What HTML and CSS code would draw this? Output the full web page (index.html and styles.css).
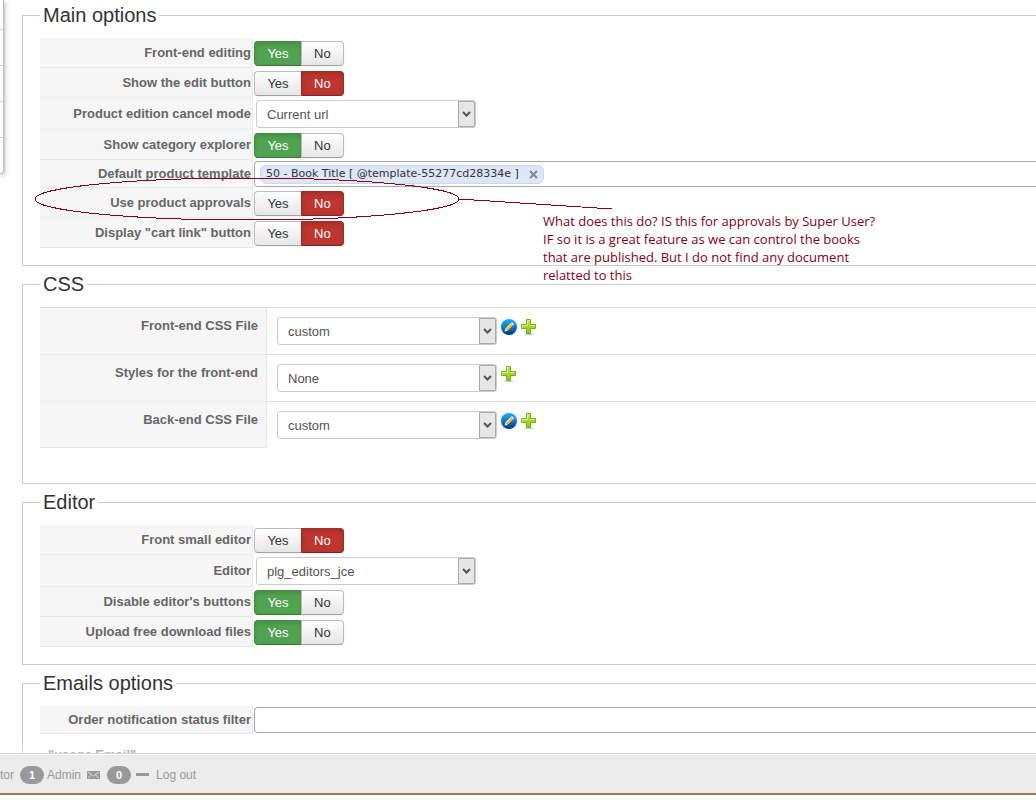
FILE: index.html
```
<!DOCTYPE html>
<html lang="en">
<head>
    <meta charset="UTF-8">
    <meta name="viewport" content="width=device-width, initial-scale=1.0">
    <title>Configuration</title>
    <link rel="stylesheet" href="styles.css">
</head>
<body>
    <!-- icons shared by the CSS file rows -->
    <svg class="sprite" aria-hidden="true">
        <defs>
            <linearGradient id="blue" x1="0" y1="0" x2="0" y2="1">
                <stop offset="0" stop-color="#12b4f5"/>
                <stop offset="0.5" stop-color="#0a78e0"/>
                <stop offset="1" stop-color="#05327c"/>
            </linearGradient>
            <linearGradient id="green" x1="0" y1="0" x2="0" y2="1">
                <stop offset="0" stop-color="#c4e84a"/>
                <stop offset="1" stop-color="#8cc80a"/>
            </linearGradient>
            <symbol id="icon-edit" viewBox="0 0 16 16">
                <circle cx="8" cy="8" r="8" fill="url(#blue)"/>
                <path d="M3.6 12.6 4.4 9.4 6.8 11.8z" fill="#fff3d0"/>
                <path d="M4.4 9.4 9.6 4.2 12 6.6 6.8 11.8z" fill="#ffb81c"/>
                <path d="M4.4 9.4 9.6 4.2 10.4 5 5.2 10.2z" fill="#ffe36a"/>
                <path d="M9.6 4.2 11 2.8 13.4 5.2 12 6.6z" fill="#f6d3b8"/>
            </symbol>
            <symbol id="icon-add" viewBox="0 0 16 16">
                <ellipse cx="8" cy="15.2" rx="5" ry="0.8" fill="#ccc"/>
                <path d="M5.5 0.5h4v5h5v4h-5v5h-4v-5h-5v-4h5z" fill="url(#green)" stroke="#76ae1c"/>
                <path d="M6.5 6.5v-5h2M1.5 8.500v-2h5M9.5 6.500h4" fill="none" stroke="#dcf296"/>
            </symbol>
        </defs>
    </svg>

    <div class="page">
        <aside class="sidebar">
            <div class="sidebar-item first"></div>
            <div class="sidebar-item"></div>
            <div class="sidebar-item"></div>
            <div class="sidebar-item"></div>
            <div class="sidebar-item"></div>
        </aside>

        <main class="content">
            <fieldset class="panel">
                <legend>Main options</legend>
                <table class="options">
                    <tr>
                        <th>Front-end editing</th>
                        <td>
                            <div class="btn-group" role="radiogroup" aria-label="Front-end editing">
                                <input type="radio" id="fe-yes" name="fe" checked><label class="yes" for="fe-yes">Yes</label>
                                <input type="radio" id="fe-no" name="fe"><label class="no" for="fe-no">No</label>
                            </div>
                        </td>
                    </tr>
                    <tr>
                        <th>Show the edit button</th>
                        <td>
                            <div class="btn-group" role="radiogroup" aria-label="Show the edit button">
                                <input type="radio" id="edit-yes" name="edit"><label class="yes" for="edit-yes">Yes</label>
                                <input type="radio" id="edit-no" name="edit" checked><label class="no" for="edit-no">No</label>
                            </div>
                        </td>
                    </tr>
                    <tr>
                        <th><label for="cancel-mode">Product edition cancel mode</label></th>
                        <td class="select-cell">
                            <select id="cancel-mode">
                                <option>Current url</option>
                            </select>
                        </td>
                    </tr>
                    <tr>
                        <th>Show category explorer</th>
                        <td>
                            <div class="btn-group" role="radiogroup" aria-label="Show category explorer">
                                <input type="radio" id="cat-yes" name="cat" checked><label class="yes" for="cat-yes">Yes</label>
                                <input type="radio" id="cat-no" name="cat"><label class="no" for="cat-no">No</label>
                            </div>
                        </td>
                    </tr>
                    <tr>
                        <th><label for="template">Default product template</label></th>
                        <td class="tags-cell">
                            <div class="tags">
                                <span class="tag">50 - Book Title [ @template-55277cd28334e ]
                                    <button type="button" class="tag-remove" aria-label="Remove">
                                        <svg width="9" height="9" viewBox="0 0 9 9"><path d="M1 1l7 7M8 1l-7 7" stroke="#888" stroke-width="2"/></svg>
                                    </button>
                                </span>
                                <input type="text" id="template">
                            </div>
                        </td>
                    </tr>
                    <tr>
                        <th>Use product approvals</th>
                        <td>
                            <div class="btn-group" role="radiogroup" aria-label="Use product approvals">
                                <input type="radio" id="app-yes" name="app"><label class="yes" for="app-yes">Yes</label>
                                <input type="radio" id="app-no" name="app" checked><label class="no" for="app-no">No</label>
                            </div>
                        </td>
                    </tr>
                    <tr>
                        <th>Display "cart link" button</th>
                        <td>
                            <div class="btn-group" role="radiogroup" aria-label="Display cart link button">
                                <input type="radio" id="cart-yes" name="cart"><label class="yes" for="cart-yes">Yes</label>
                                <input type="radio" id="cart-no" name="cart" checked><label class="no" for="cart-no">No</label>
                            </div>
                        </td>
                    </tr>
                </table>
            </fieldset>

            <fieldset class="panel">
                <legend>CSS</legend>
                <table class="options files">
                    <tr>
                        <th><label for="css-front">Front-end CSS File</label></th>
                        <td>
                            <div class="file-row">
                                <select id="css-front">
                                    <option>custom</option>
                                </select>
                                <a href="#" aria-label="Edit"><svg width="16" height="16"><use href="#icon-edit"/></svg></a>
                                <a href="#" aria-label="Add"><svg width="16" height="16"><use href="#icon-add"/></svg></a>
                            </div>
                        </td>
                    </tr>
                    <tr>
                        <th><label for="css-style">Styles for the front-end</label></th>
                        <td>
                            <div class="file-row">
                                <select id="css-style">
                                    <option>None</option>
                                </select>
                                <a href="#" aria-label="Add"><svg width="16" height="16"><use href="#icon-add"/></svg></a>
                            </div>
                        </td>
                    </tr>
                    <tr>
                        <th><label for="css-back">Back-end CSS File</label></th>
                        <td>
                            <div class="file-row">
                                <select id="css-back">
                                    <option>custom</option>
                                </select>
                                <a href="#" aria-label="Edit"><svg width="16" height="16"><use href="#icon-edit"/></svg></a>
                                <a href="#" aria-label="Add"><svg width="16" height="16"><use href="#icon-add"/></svg></a>
                            </div>
                        </td>
                    </tr>
                </table>
            </fieldset>

            <fieldset class="panel">
                <legend>Editor</legend>
                <table class="options">
                    <tr>
                        <th>Front small editor</th>
                        <td>
                            <div class="btn-group" role="radiogroup" aria-label="Front small editor">
                                <input type="radio" id="small-yes" name="small"><label class="yes" for="small-yes">Yes</label>
                                <input type="radio" id="small-no" name="small" checked><label class="no" for="small-no">No</label>
                            </div>
                        </td>
                    </tr>
                    <tr>
                        <th><label for="editor">Editor</label></th>
                        <td class="select-cell">
                            <select id="editor">
                                <option>plg_editors_jce</option>
                            </select>
                        </td>
                    </tr>
                    <tr>
                        <th>Disable editor's buttons</th>
                        <td>
                            <div class="btn-group" role="radiogroup" aria-label="Disable editor's buttons">
                                <input type="radio" id="dis-yes" name="dis" checked><label class="yes" for="dis-yes">Yes</label>
                                <input type="radio" id="dis-no" name="dis"><label class="no" for="dis-no">No</label>
                            </div>
                        </td>
                    </tr>
                    <tr>
                        <th>Upload free download files</th>
                        <td>
                            <div class="btn-group" role="radiogroup" aria-label="Upload free download files">
                                <input type="radio" id="up-yes" name="up" checked><label class="yes" for="up-yes">Yes</label>
                                <input type="radio" id="up-no" name="up"><label class="no" for="up-no">No</label>
                            </div>
                        </td>
                    </tr>
                </table>
            </fieldset>

            <fieldset class="panel">
                <legend>Emails options</legend>
                <table class="options">
                    <tr>
                        <th><label for="status-filter">Order notification status filter</label></th>
                        <td class="tags-cell">
                            <div class="tags">
                                <input type="text" id="status-filter">
                            </div>
                        </td>
                    </tr>
                </table>
                <p class="more">"usage Email"</p>
            </fieldset>
        </main>

        <!-- hand-drawn note over the form -->
        <div class="note">
            <svg class="note-mark" width="580" height="46" viewBox="0 0 580 46">
                <ellipse cx="213" cy="23" rx="212" ry="21"/>
                <path d="M425 23 578 33"/>
            </svg>
            <p class="note-text">What does this do? IS this for approvals by Super User?<br>IF so it is a great feature as we can control the books<br>that are published. But I do not find any document<br>relatted to this</p>
        </div>
    </div>

    <footer class="status">
        <span>tor</span>
        <span class="badge">1</span>
        <span>Admin</span>
        <svg class="mail" width="13" height="8" viewBox="0 0 13 8">
            <rect width="13" height="8" fill="#999"/>
            <path d="M1 1l5.5 4L12 1M1 7l3.500-3M12 7L8.500 4" fill="none" stroke="#ececec" stroke-width="0.8"/>
        </svg>
        <span class="badge">0</span>
        <span class="dash"></span>
        <a href="#">Log out</a>
    </footer>
</body>
</html>
```
FILE: styles.css
```
* {
    box-sizing: border-box;
}

body {
    margin: 0;
    height: 100vh;
    display: flex;
    flex-direction: column;
    overflow: hidden;
    padding-bottom: 5px;
    background-color: #fff;
    color: #555;
    font-family: "Liberation Sans", Arial, sans-serif;
    font-size: 13px;
    line-height: 18px;
}

.sprite {
    position: absolute;
    width: 0;
    height: 0;
}

.page {
    position: relative;
    flex: 1;
    min-height: 0;
    display: flex;
    align-items: flex-start;
    gap: 18px;
    overflow: hidden;
}

.sidebar {
    flex: none;
    width: 4px;
    border-right: 1px solid #bbb;
    border-bottom: 1px solid #bbb;
    border-bottom-right-radius: 4px;
    box-shadow: 1px 2px 4px rgba(0,0,0,0.3);
}

.sidebar-item {
    height: 36px;
    border-bottom: 1px solid #ccc;
}

.sidebar-item.first {
    height: 30px;
}

.sidebar-item:last-child {
    height: 35px;
    border-bottom: none;
}

.content {
    flex: 1;
    min-width: 0;
    display: flex;
    flex-direction: column;
    gap: 3px;
}

.panel {
    margin: 0;
    padding: 8px 0 17px 17px;
    border: 1px solid #ccc;
    border-right: none;
    min-width: 0;
}

legend {
    padding: 0 3px;
    color: #333;
    font-size: 20px;
    line-height: 30px;
}

.options {
    width: 100%;
    border-collapse: separate;
    border-spacing: 0;
}

.options th {
    width: 213px;
    padding: 0 1px 0 0;
    background-color: #f6f6f6;
    border-right: 1px solid #e9e9e9;
    border-bottom: 1px solid #e9e9e9;
    color: #666;
    text-align: right;
    white-space: nowrap;
}

.options td {
    padding: 3px 0 2px 1px;
}

.options .select-cell {
    padding: 2px 0 2px 3px;
}

.options .tags-cell {
    padding: 1px 0 1px 1px;
}

/* yes / no switch */
.btn-group {
    display: flex;
}

.btn-group input {
    appearance: none;
    width: 0;
    height: 0;
    margin: 0;
}

.btn-group label {
    height: 25px;
    padding: 0 12px;
    border: 1px solid #bbb;
    border-bottom-color: #a2a2a2;
    background: linear-gradient(#fff, #e6e6e6);
    color: #333;
    line-height: 24px;
    text-align: center;
    cursor: pointer;
    box-shadow: 0 1px 2px rgba(0,0,0,0.05);
}

.btn-group .yes {
    width: 47px;
    border-radius: 4px 0 0 4px;
    border-right: none;
}

.btn-group .no {
    border-radius: 0 4px 4px 0;
}

.btn-group input:checked + .yes {
    background: #51a351;
    border-color: #419141 #419141 #2f7a2f;
    color: #fff;
    box-shadow: inset 0 2px 4px rgba(0,0,0,0.15);
}

.btn-group input:checked + .no {
    background: #bd362f;
    border-color: #a52a24 #a52a24 #802420;
    color: #fff;
    box-shadow: inset 0 2px 4px rgba(0,0,0,0.15);
}

select {
    appearance: none;
    display: block;
    width: 220px;
    height: 28px;
    padding: 2px 20px 0 10px;
    border: 1px solid #ccc;
    border-radius: 3px;
    background: #fff url("data:image/svg+xml,%3Csvg xmlns='http://www.w3.org/2000/svg' width='17' height='26'%3E%3Crect x='.5' y='.5' width='16' height='25' fill='%23e6e6e6' stroke='%23aaa'/%3E%3Cpath d='M5 11l3.500 3.500 3.500-3.500' fill='none' stroke='%23555' stroke-width='2'/%3E%3C/svg%3E") no-repeat right center;
    color: #555;
    font: inherit;
}

/* tag box */
.tags {
    display: flex;
    align-items: center;
    height: 26px;
    padding-left: 5px;
    border: 1px solid #aaa;
    border-right: none;
    border-radius: 4px 0 0 4px;
    background-color: #fff;
}

.tags input {
    flex: 1;
    min-width: 0;
    border: none;
    outline: none;
    background: none;
}

.tag {
    display: flex;
    align-items: center;
    gap: 10px;
    height: 19px;
    padding: 0 5px;
    border: 1px solid #cad8f3;
    border-radius: 6px;
    background-color: #dee7f8;
    color: #333;
    font-family: "DejaVu Sans", Verdana, sans-serif;
    font-size: 11px;
    white-space: nowrap;
}

.tag-remove {
    display: flex;
    padding: 0;
    border: none;
    background: none;
    cursor: pointer;
}

/* css files */
.files {
    margin-bottom: 18px;
    border-top: 1px solid #ddd;
}

.files th {
    width: 227px;
    padding: 9px 8px 0 0;
    vertical-align: top;
}

.files td {
    padding: 9px 10px;
    border-bottom: 1px solid #ddd;
}

.files tr:last-child td {
    border-bottom: none;
}

.file-row {
    display: flex;
    gap: 4px;
}

.file-row a {
    height: 16px;
    margin-top: 2px;
}

.file-row svg {
    display: block;
}

.more {
    margin: 12px 0 0 8px;
    color: #777;
    font-weight: bold;
}

/* note */
.note {
    position: absolute;
    left: 34px;
    top: 176px;
    color: #880015;
}

.note-mark {
    display: block;
    fill: none;
    stroke: #880015;
    shape-rendering: crispEdges;
}

.note-text {
    position: absolute;
    left: 509px;
    top: 36px;
    margin: 0;
    font-family: "Open Sans", "Noto Sans", sans-serif;
    font-size: 13px;
    white-space: nowrap;
}

.status {
    flex: none;
    position: relative;
    display: flex;
    align-items: center;
    height: 42px;
    padding-top: 2px;
    border-top: 1px solid #d8d8d8;
    border-bottom: 2px solid #97803f;
    background-color: #ececec;
    box-shadow: inset 0 1px #fff, 0 -4px 8px rgba(255,255,255,0.6);
    color: #999;
    font-size: 12px;
}

.status a {
    margin-left: 7px;
    color: #999;
    text-decoration: none;
}

.badge {
    width: 24px;
    margin: 0 3px 0 6px;
    border-radius: 9px;
    background-color: #999;
    color: #fff;
    font-size: 11px;
    font-weight: bold;
    text-align: center;
}

.mail {
    margin: 0 1px 0 6px;
}

.dash {
    width: 13px;
    height: 3px;
    margin-left: 2px;
    background-color: #999;
}
```
